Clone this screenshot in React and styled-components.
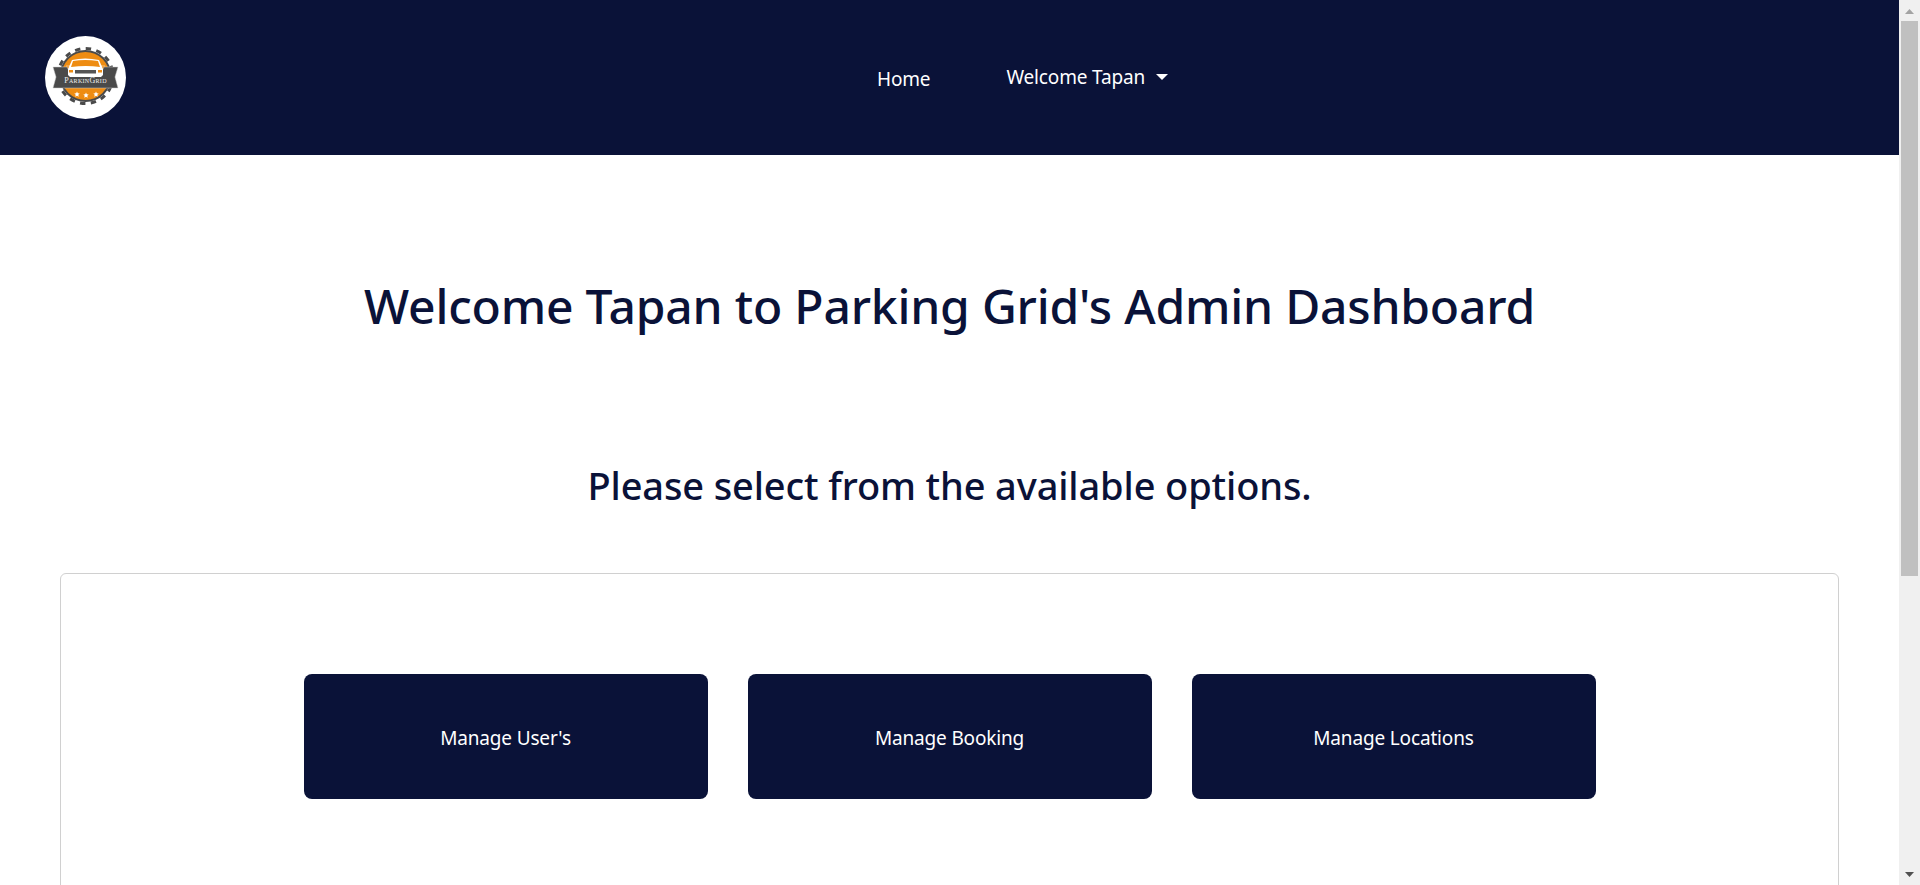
import React from 'react'
import styled, { createGlobalStyle } from 'styled-components'

const navy = '#0a1238'

const GlobalStyle = createGlobalStyle`
  body {
    margin: 0;
    background: #fff;
    font-family: "Noto Sans", "Open Sans", sans-serif;
  }
  ::-webkit-scrollbar {
    display: none;
  }
`

const Page = styled.div`
  padding-right: 21px;
`

const Navbar = styled.nav`
  display: flex;
  align-items: center;
  height: 155px;
  padding-left: 45px;
  background: ${navy};
`

const NavLinks = styled.ul`
  display: flex;
  align-items: center;
  gap: 76px;
  margin: 0 0 0 751px;
  padding: 0;
  list-style: none;
`

const NavLink = styled.a`
  position: relative;
  top: ${({ $offset }) => $offset}px;
  display: flex;
  align-items: center;
  color: #fff;
  font-size: 19px;
  letter-spacing: -0.16px;
  text-decoration: none;
`

const Caret = styled.span`
  display: inline-block;
  margin-left: 11px;
  border-top: 6px solid #fff;
  border-left: 6px solid transparent;
  border-right: 6px solid transparent;
`

const Main = styled.main`
  padding: 0 60px;
`

const Title = styled.h1`
  margin: 0;
  padding-top: 120px;
  color: ${navy};
  font-size: 48px;
  font-weight: 500;
  letter-spacing: -0.2px;
  line-height: 62px;
  text-align: center;
`

const Subtitle = styled.h2`
  margin: 0;
  padding-top: 123px;
  color: ${navy};
  font-size: 38px;
  font-weight: 500;
  letter-spacing: -0.13px;
  line-height: 50px;
  text-align: center;
`

const Card = styled.section`
  display: flex;
  justify-content: center;
  align-items: flex-start;
  gap: 40px;
  height: 771px;
  margin-top: 63px;
  padding-top: 100px;
  box-sizing: border-box;
  border: 1px solid #d0d0d0;
  border-radius: 6px;
`

const OptionButton = styled.button`
  width: 404px;
  height: 125px;
  padding-top: 3px;
  border: 0;
  border-radius: 8px;
  background: ${navy};
  color: #fff;
  font-family: inherit;
  font-size: 19px;
  letter-spacing: -0.16px;
`

/* the shot has no native scrollbar, so it is drawn over the page edge */
const ScrollTrack = styled.div`
  position: fixed;
  top: 0;
  right: 0;
  bottom: 0;
  display: flex;
  flex-direction: column;
  width: 21px;
  background: #f0f0f0;
`

const ScrollArrow = styled.svg`
  display: block;
  flex: none;
  width: 21px;
  height: 21px;
`

const ScrollThumb = styled.div`
  flex: none;
  height: 555px;
  margin: 0 2px;
  background: #c0c0c0;
`

const ScrollGap = styled.div`
  flex: 1;
`

const Logo = () => (
  <svg width="81" height="83" viewBox="0 0 81 83">
    <ellipse cx="40.500" cy="41.500" rx="40.500" ry="41.500" fill="#fff" />
    <circle cx="40.500" cy="40" r="27.500" fill="none" stroke="#4a4a4a" strokeWidth="3" strokeDasharray="5.400 5.400" />
    <circle cx="40.500" cy="40" r="26" fill="#4a4a4a" />
    <circle cx="40.500" cy="40" r="24" fill="#ee8c12" />
    <path d="M21 30h39" stroke="#fff" strokeWidth="0.800" opacity="0.600" />
    <path d="M8 31h14l2 4h33l2-4h14l-3 10 3 11H8l3-11z" fill="#4a4a4a" stroke="#ccc" strokeWidth="0.500" />
    <path d="M23 33l4-9q13-3 27 0l4 9v6l-2 2H25l-2-2z" fill="#fff" />
    <path d="M28 25q12-2 25 0l2 6q-14-2-29 0z" fill="#ee8c12" />
    <rect x="30" y="34" width="21" height="3.500" fill="#555" />
    <rect x="24" y="34" width="4" height="2.500" fill="#ee8c12" />
    <rect x="53" y="34" width="4" height="2.500" fill="#ee8c12" />
    <text x="40.500" y="47" fontFamily="Liberation Serif, serif" fontSize="8" fontVariant="small-caps" letterSpacing="0.300" fill="#eee" textAnchor="middle">ParkinGrid</text>
    <g fill="#fff">
      <path d="M32 55.500l.8 1.800 1.900.2-1.400 1.300.4 1.900-1.700-1-1.700 1 .4-1.900-1.400-1.300 1.900-.2z" />
      <path d="M41 56.500l.8 1.800 1.900.2-1.400 1.300.4 1.900-1.700-1-1.700 1 .4-1.900-1.400-1.300 1.900-.2z" />
      <path d="M51 55.500l.8 1.800 1.900.2-1.400 1.300.4 1.900-1.700-1-1.700 1 .4-1.900-1.400-1.300 1.900-.2z" />
    </g>
  </svg>
)

const options = ["Manage User's", 'Manage Booking', 'Manage Locations']

const App = () => (
  <>
    <GlobalStyle />
    <Page>
      <Navbar>
        <Logo />
        <NavLinks>
          <li><NavLink href="#" $offset={1}>Home</NavLink></li>
          <li><NavLink href="#" $offset={-1}>Welcome Tapan<Caret /></NavLink></li>
        </NavLinks>
      </Navbar>
      <Main>
        <Title>Welcome Tapan to Parking Grid's Admin Dashboard</Title>
        <Subtitle>Please select from the available options.</Subtitle>
        <Card>
          {options.map((label) => (
            <OptionButton key={label}>{label}</OptionButton>
          ))}
        </Card>
      </Main>
    </Page>
    <ScrollTrack>
      <ScrollArrow viewBox="0 0 21 21">
        <path d="M6 14h9l-4.500-5z" fill="#a3a3a3" />
      </ScrollArrow>
      <ScrollThumb />
      <ScrollGap />
      <ScrollArrow viewBox="0 0 21 21">
        <path d="M6 8h9l-4.500 5z" fill="#505050" />
      </ScrollArrow>
    </ScrollTrack>
  </>
)

export default App
